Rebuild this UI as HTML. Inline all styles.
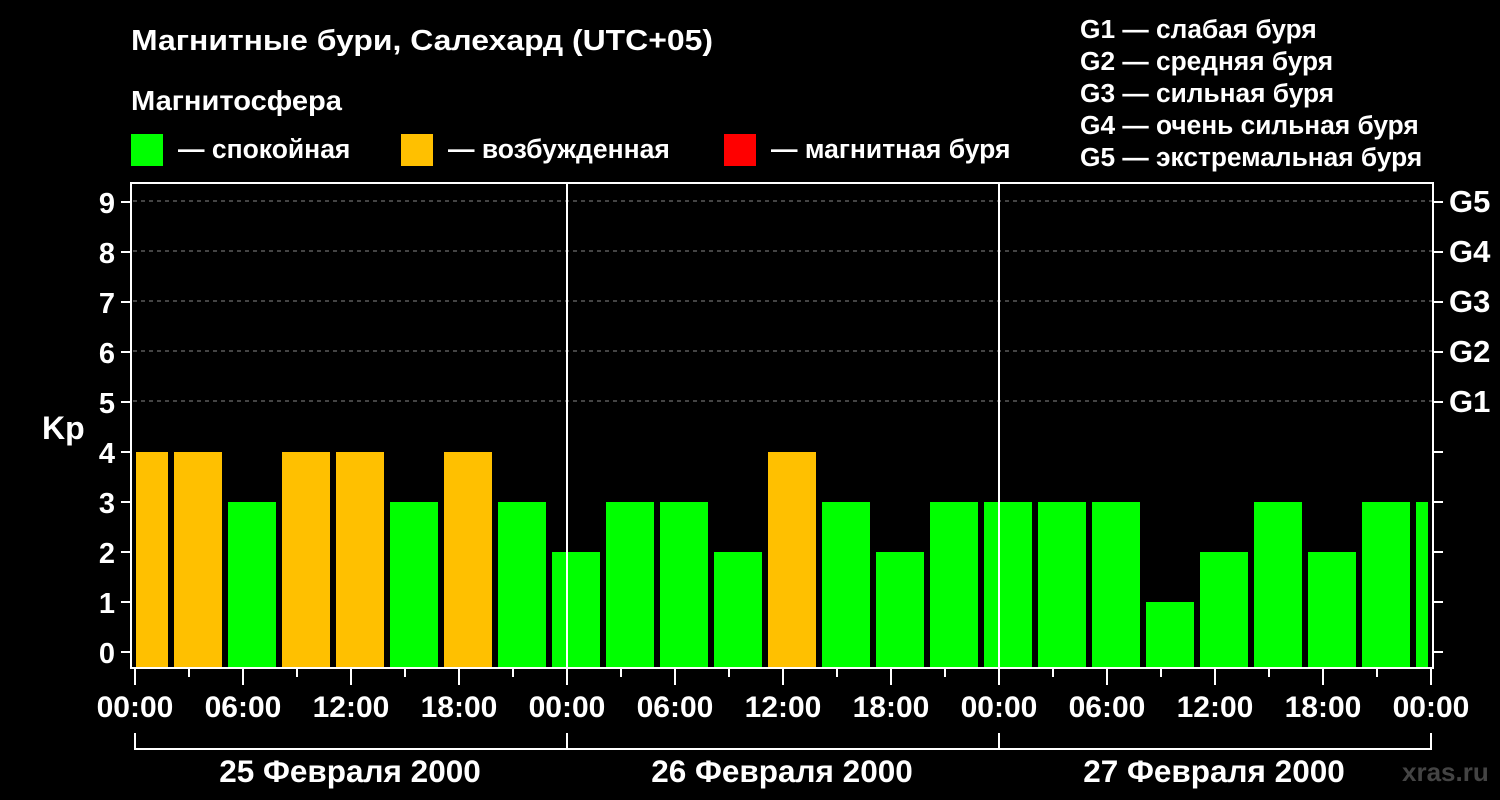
<!DOCTYPE html><html><head><style>body{margin:0;background:#000}svg{display:block}text{font-family:"Liberation Sans",Arial,sans-serif;font-weight:bold;fill:#fff}</style></head><body>
<svg width="1500" height="800" xmlns="http://www.w3.org/2000/svg">
<rect width="1500" height="800" fill="#000"/>
<text x="131" y="50" font-size="29" textLength="582" lengthAdjust="spacingAndGlyphs">Магнитные бури, Салехард (UTC+05)</text>
<text x="131" y="110" font-size="28" textLength="211" lengthAdjust="spacingAndGlyphs">Магнитосфера</text>
<rect x="131" y="134" width="32" height="32" fill="#00ff00"/><text x="178" y="158" font-size="26.5">— спокойная</text>
<rect x="401" y="134" width="32" height="32" fill="#ffc000"/><text x="448" y="158" font-size="26.5">— возбужденная</text>
<rect x="724" y="134" width="32" height="32" fill="#ff0000"/><text x="771" y="158" font-size="26.5">— магнитная буря</text>
<g font-size="26.3"><text x="1080" y="38">G1 — слабая буря</text><text x="1080" y="70">G2 — средняя буря</text><text x="1080" y="102">G3 — сильная буря</text><text x="1080" y="134">G4 — очень сильная буря</text><text x="1080" y="166">G5 — экстремальная буря</text></g>
<g stroke="#888" stroke-dasharray="4,4" stroke-width="1">
<line x1="133" x2="1432" y1="201" y2="201"/><line x1="133" x2="1432" y1="251" y2="251"/><line x1="133" x2="1432" y1="301" y2="301"/><line x1="133" x2="1432" y1="351" y2="351"/><line x1="133" x2="1432" y1="401" y2="401"/></g>
<g id="bars"></g>
<line x1="567" x2="567" y1="183" y2="668" stroke="#fff" stroke-width="2"/>
<line x1="999" x2="999" y1="183" y2="668" stroke="#fff" stroke-width="2"/>
<rect x="131" y="183" width="1302" height="485" fill="none" stroke="#fff" stroke-width="2"/>
<g stroke="#fff" stroke-width="2" id="ticks"></g>
<g font-size="29" text-anchor="end" id="ylab"></g>
<text x="42" y="439" font-size="32">Kp</text>
<g font-size="31"><text x="1449" y="212">G5</text><text x="1449" y="262">G4</text><text x="1449" y="312">G3</text><text x="1449" y="362">G2</text><text x="1449" y="412">G1</text></g>
<g font-size="30" text-anchor="middle" id="xlab"></g>
<path d="M135 733V749H1431V733M567 733V749M999 733V749" stroke="#fff" stroke-width="2" fill="none"/>
<g font-size="31.5" text-anchor="middle"><text x="350" y="782">25 Февраля 2000</text><text x="782" y="782">26 Февраля 2000</text><text x="1214" y="782">27 Февраля 2000</text></g>
<text x="1402" y="781" font-size="26" style="fill:#444">xras.ru</text>
</svg>
<script>
const ns="http://www.w3.org/2000/svg";
const v=[4,4,3,4,4,3,4,3,2,3,3,2,4,3,2,3,3,3,3,1,2,3,2,3,3];
const b=document.getElementById('bars');
v.forEach((k,i)=>{let x0=120+54*i,x1=x0+48;x0=Math.max(x0,136);x1=Math.min(x1,1428);const top=652-50*k;const r=document.createElementNS(ns,'rect');r.setAttribute('x',x0);r.setAttribute('width',x1-x0);r.setAttribute('y',top);r.setAttribute('height',668-top);r.setAttribute('fill',k>=4?'#ffc000':'#00ff00');b.appendChild(r);});
const t=document.getElementById('ticks'),yl=document.getElementById('ylab'),xl=document.getElementById('xlab');
function ln(a,b2,c,d){const l=document.createElementNS(ns,'line');l.setAttribute('x1',a);l.setAttribute('y1',b2);l.setAttribute('x2',c);l.setAttribute('y2',d);t.appendChild(l);}
for(let k=0;k<=9;k++){const y=652-50*k;ln(121,y,131,y);ln(1433,y,1443,y);const tx=document.createElementNS(ns,'text');tx.setAttribute('x',115);tx.setAttribute('y',y+11);tx.textContent=k;yl.appendChild(tx);}
const labs=['00:00','06:00','12:00','18:00'];
for(let i=0;i<=24;i++){const x=135+54*i;ln(x,668,x,i%2?677:685);if(i%2==0){const tx=document.createElementNS(ns,'text');tx.setAttribute('x',x);tx.setAttribute('y',717);tx.textContent=labs[(i/2)%4];xl.appendChild(tx);}}
</script>
</body></html>
